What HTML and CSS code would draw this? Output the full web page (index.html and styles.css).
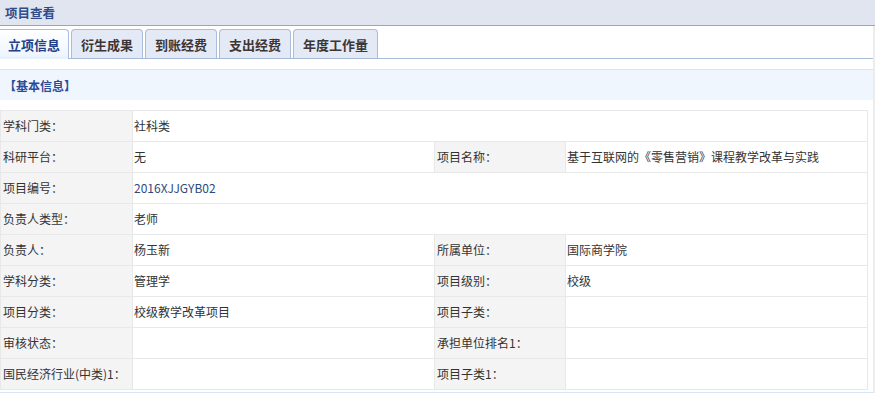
FILE: index.html
```html
<!DOCTYPE html>
<html lang="zh-CN">
<head>
<meta charset="utf-8">
<title>项目查看</title>
<link rel="stylesheet" href="styles.css">
</head>
<body>
<div class="header"><span class="title">项目查看</span></div>
<div class="content">
  <div class="tabs">
    <div class="tab active">立项信息</div>
    <div class="tab">衍生成果</div>
    <div class="tab">到账经费</div>
    <div class="tab">支出经费</div>
    <div class="tab">年度工作量</div>
  </div>
  <div class="section">【基本信息】</div>
  <table class="info">
    <colgroup><col class="c1"><col class="c2"><col class="c3"><col class="c4"></colgroup>
    <tr><td class="lbl">学科门类：</td><td colspan="3">社科类</td></tr>
    <tr><td class="lbl">科研平台：</td><td>无</td><td class="lbl">项目名称：</td><td>基于互联网的《零售营销》课程教学改革与实践</td></tr>
    <tr><td class="lbl">项目编号：</td><td colspan="3" class="code">2016XJJGYB02</td></tr>
    <tr><td class="lbl">负责人类型：</td><td colspan="3">老师</td></tr>
    <tr><td class="lbl">负责人：</td><td>杨玉新</td><td class="lbl">所属单位：</td><td>国际商学院</td></tr>
    <tr><td class="lbl">学科分类：</td><td>管理学</td><td class="lbl">项目级别：</td><td>校级</td></tr>
    <tr><td class="lbl">项目分类：</td><td>校级教学改革项目</td><td class="lbl">项目子类：</td><td></td></tr>
    <tr><td class="lbl">审核状态：</td><td></td><td class="lbl">承担单位排名1：</td><td></td></tr>
    <tr><td class="lbl">国民经济行业(中类)1：</td><td></td><td class="lbl">项目子类1：</td><td></td></tr>
  </table>
</div>
</body>
</html>
```
FILE: styles.css
```css
html, body {
  margin: 0;
  padding: 0;
  background: #fff;
  font-family: "Noto Sans CJK SC", "Liberation Sans", sans-serif;
  font-size: 12px;
  color: #333;
}
.header {
  height: 25px;
  background: #e1e5f0;
  border-bottom: 1px solid #94a6cf;
  display: flex;
  align-items: center;
  padding-left: 5px;
}
.title {
  font-size: 12.5px;
  font-weight: bold;
  color: #2f4b8c;
}
.content {
  width: 873px;
  border-right: 2px solid #ececec;
  padding-bottom: 2px;
  border-bottom: 1px solid #d6e6f6;
}
.tabs {
  display: flex;
  gap: 2px;
  padding-top: 3px;
  border-bottom: 1px solid #a7bad8;
  height: 29px;
  box-sizing: content-box;
}
.tab {
  height: 28px;
  padding: 0 9px;
  border: 1px solid #a9bcdb;
  border-bottom: none;
  border-radius: 4px 4px 0 0;
  background: #e3eaf6;
  font-size: 13px;
  font-weight: bold;
  color: #3d3535;
  display: flex;
  align-items: center;
  line-height: 1;
}
.tab.active {
  height: 29px;
  margin-bottom: -1px;
  border-left: none;
  padding-left: 8px;
  padding-right: 8px;
  background: linear-gradient(#ffffff, #f2f8ff 70%, #e8f2fd);
  color: #213f8a;
  border-radius: 0 4px 0 0;
}
.section {
  margin-top: 10px;
  height: 30px;
  border-top: 1px solid #d6e4f3;
  background: #eff6fd;
  display: flex;
  align-items: center;
  padding-left: 4px;
  font-weight: bold;
  color: #2c4c9b;
}
.info {
  margin-top: 10px;
  border-collapse: collapse;
  width: 867px;
  table-layout: fixed;
}
.info col.c1 { width: 132px; }
.info col.c2 { width: 302px; }
.info col.c3 { width: 131px; }
.info col.c4 { width: 302px; }
.info td {
  height: 30px;
  padding: 0 0 0 1px;
  border: 1px solid #e8e8e8;
  vertical-align: middle;
  white-space: nowrap;
  overflow: hidden;
  line-height: 1;
}
.info td.lbl {
  background: #f4f4f4;
  padding-left: 2px;
}
.info td.code {
  color: #2e4a7e;
}
```
